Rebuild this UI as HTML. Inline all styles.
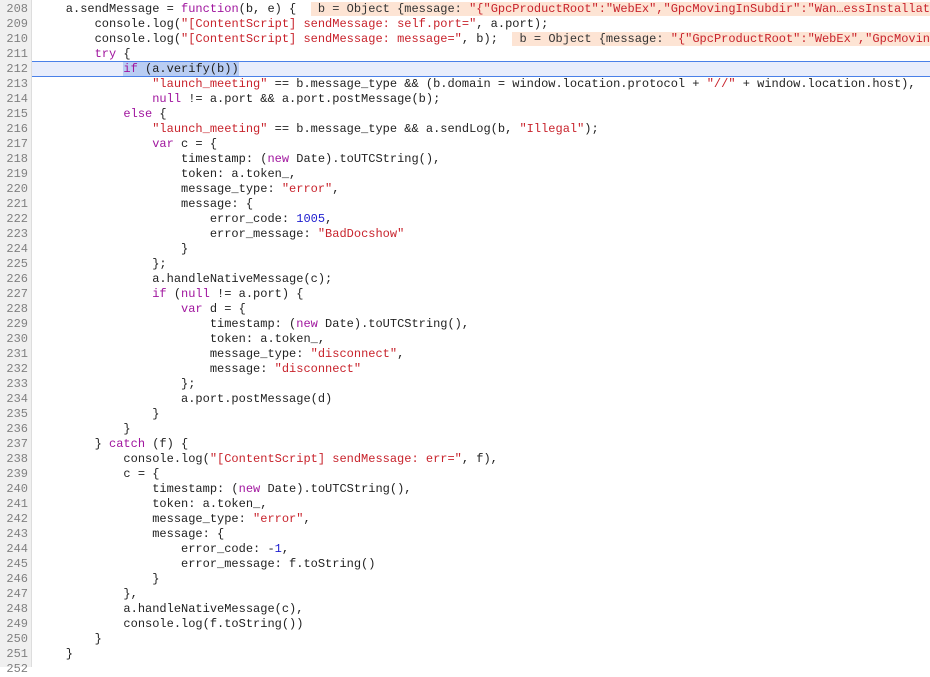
<!DOCTYPE html><html><head><meta charset="utf-8"><style>
body{margin:0;width:930px;height:667px;overflow:hidden;background:#fff;position:relative;font-family:"Liberation Mono",monospace;font-size:12px}
.g{position:absolute;left:0;top:0;width:31px;height:667px;background:#f0f0f0;border-right:1px solid #ddd}
.n{position:absolute;left:0;top:2px;width:28px;text-align:right;color:#808080;line-height:15px;white-space:pre}
.c{position:absolute;left:37px;top:2px;white-space:pre;color:#222;margin:0;font:inherit;line-height:15px}
.k{color:#a0159e}.s{color:#c8232c}.m{color:#1c1ccf}
.hl{position:absolute;left:32px;right:0;top:61px;height:14px;background:#e8edfc;border-top:1px solid #4a80e8;border-bottom:1px solid #4a80e8}
.sel{background:#b9cdf3}
.v{background:#fde4d4;color:#333}
</style></head><body>
<div class="g"></div>
<div class="n">208
209
210
211
212
213
214
215
216
217
218
219
220
221
222
223
224
225
226
227
228
229
230
231
232
233
234
235
236
237
238
239
240
241
242
243
244
245
246
247
248
249
250
251
252</div>
<div class="hl"></div>
<pre class="c">    a.sendMessage = <span class="k">function</span>(b, e) {  <span class="v"> b = Object {message: <span class="s">"{"GpcProductRoot":"WebEx","GpcMovingInSubdir":"Wan…essInstallat</span></span>
        console.log(<span class="s">"[ContentScript] sendMessage: self.port="</span>, a.port);
        console.log(<span class="s">"[ContentScript] sendMessage: message="</span>, b);  <span class="v"> b = Object {message: <span class="s">"{"GpcProductRoot":"WebEx","GpcMovin</span></span>
        <span class="k">try</span> {
            <span class="sel"><span class="k">if</span> (a.verify(b))</span>
                <span class="s">"launch_meeting"</span> == b.message_type &amp;&amp; (b.domain = window.location.protocol + <span class="s">"//"</span> + window.location.host),
                <span class="k">null</span> != a.port &amp;&amp; a.port.postMessage(b);
            <span class="k">else</span> {
                <span class="s">"launch_meeting"</span> == b.message_type &amp;&amp; a.sendLog(b, <span class="s">"Illegal"</span>);
                <span class="k">var</span> c = {
                    timestamp: (<span class="k">new</span> Date).toUTCString(),
                    token: a.token_,
                    message_type: <span class="s">"error"</span>,
                    message: {
                        error_code: <span class="m">1005</span>,
                        error_message: <span class="s">"BadDocshow"</span>
                    }
                };
                a.handleNativeMessage(c);
                <span class="k">if</span> (<span class="k">null</span> != a.port) {
                    <span class="k">var</span> d = {
                        timestamp: (<span class="k">new</span> Date).toUTCString(),
                        token: a.token_,
                        message_type: <span class="s">"disconnect"</span>,
                        message: <span class="s">"disconnect"</span>
                    };
                    a.port.postMessage(d)
                }
            }
        } <span class="k">catch</span> (f) {
            console.log(<span class="s">"[ContentScript] sendMessage: err="</span>, f),
            c = {
                timestamp: (<span class="k">new</span> Date).toUTCString(),
                token: a.token_,
                message_type: <span class="s">"error"</span>,
                message: {
                    error_code: -<span class="m">1</span>,
                    error_message: f.toString()
                }
            },
            a.handleNativeMessage(c),
            console.log(f.toString())
        }
    }
</pre>
</body></html>
